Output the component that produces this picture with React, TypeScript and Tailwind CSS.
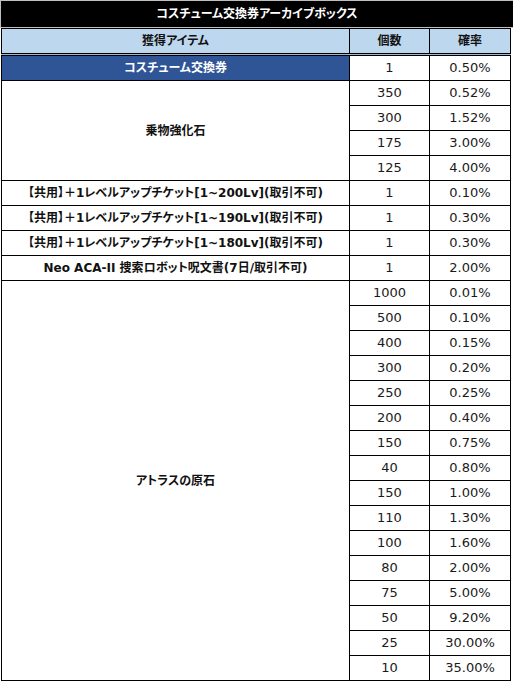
const font = {
  fontFamily: '"DejaVu Sans", "Noto Sans CJK JP", sans-serif',
};

type Group = { name: string; rows: [string, string][]; highlight?: boolean };

const groups: Group[] = [
  { name: "コスチューム交換券", rows: [["1", "0.50%"]], highlight: true },
  {
    name: "乗物強化石",
    rows: [
      ["350", "0.52%"],
      ["300", "1.52%"],
      ["175", "3.00%"],
      ["125", "4.00%"],
    ],
  },
  { name: "【共用】＋1レベルアップチケット[1~200Lv](取引不可)", rows: [["1", "0.10%"]] },
  { name: "【共用】＋1レベルアップチケット[1~190Lv](取引不可)", rows: [["1", "0.30%"]] },
  { name: "【共用】＋1レベルアップチケット[1~180Lv](取引不可)", rows: [["1", "0.30%"]] },
  { name: "Neo ACA-II 捜索ロボット呪文書(7日/取引不可)", rows: [["1", "2.00%"]] },
  {
    name: "アトラスの原石",
    rows: [
      ["1000", "0.01%"],
      ["500", "0.10%"],
      ["400", "0.15%"],
      ["300", "0.20%"],
      ["250", "0.25%"],
      ["200", "0.40%"],
      ["150", "0.75%"],
      ["40", "0.80%"],
      ["150", "1.00%"],
      ["110", "1.30%"],
      ["100", "1.60%"],
      ["80", "2.00%"],
      ["75", "5.00%"],
      ["50", "9.20%"],
      ["25", "30.00%"],
      ["10", "35.00%"],
    ],
  },
];

const cell = "flex items-center justify-center border-r border-b border-black";

export default function App() {
  let row = 1;
  const cells: React.ReactNode[] = [];
  groups.forEach((g, gi) => {
    const span = g.rows.length;
    cells.push(
      <div
        key={`n${gi}`}
        className={`${cell} font-bold text-[12px] [font-feature-settings:'palt'] ${
          g.highlight ? "bg-[#2f5597] text-white" : "bg-white text-[#111]"
        }`}
        style={{ gridColumn: 1, gridRow: `${row} / span ${span}` }}
      >
        {g.name}
      </div>
    );
    g.rows.forEach(([count, rate], ri) => {
      cells.push(
        <div key={`c${gi}-${ri}`} className={`${cell} text-[13px] text-[#1a1a1a]`} style={{ gridColumn: 2, gridRow: row + ri }}>
          {count}
        </div>,
        <div key={`r${gi}-${ri}`} className={`${cell} text-[13px] text-[#1a1a1a]`} style={{ gridColumn: 3, gridRow: row + ri }}>
          {rate}
        </div>
      );
    });
    row += span;
  });

  return (
    <div className="w-[513px] h-[682px] bg-white" style={font}>
      <div className="h-[28px] bg-black border-t border-l border-b border-[#bfbfbf] flex items-center justify-center text-white font-bold text-[12px] [font-feature-settings:'palt']">
        コスチューム交換券アーカイブボックス
      </div>
      <div className="ml-px w-[510px] grid grid-cols-[348px_80px_81px] grid-rows-[25px] border-l border-t border-black bg-[#bdd7ee] font-bold text-[12px] text-[#111] [font-feature-settings:'palt']">
        <div className={cell}>獲得アイテム</div>
        <div className={cell}>個数</div>
        <div className={cell}>確率</div>
      </div>
      <div className="h-px bg-[#9fb8d8] ml-px w-[510px]" />
      <div className="ml-px w-[510px] grid grid-cols-[348px_80px_81px] auto-rows-[25px] border-l border-t border-black">
        {cells}
      </div>
    </div>
  );
}
